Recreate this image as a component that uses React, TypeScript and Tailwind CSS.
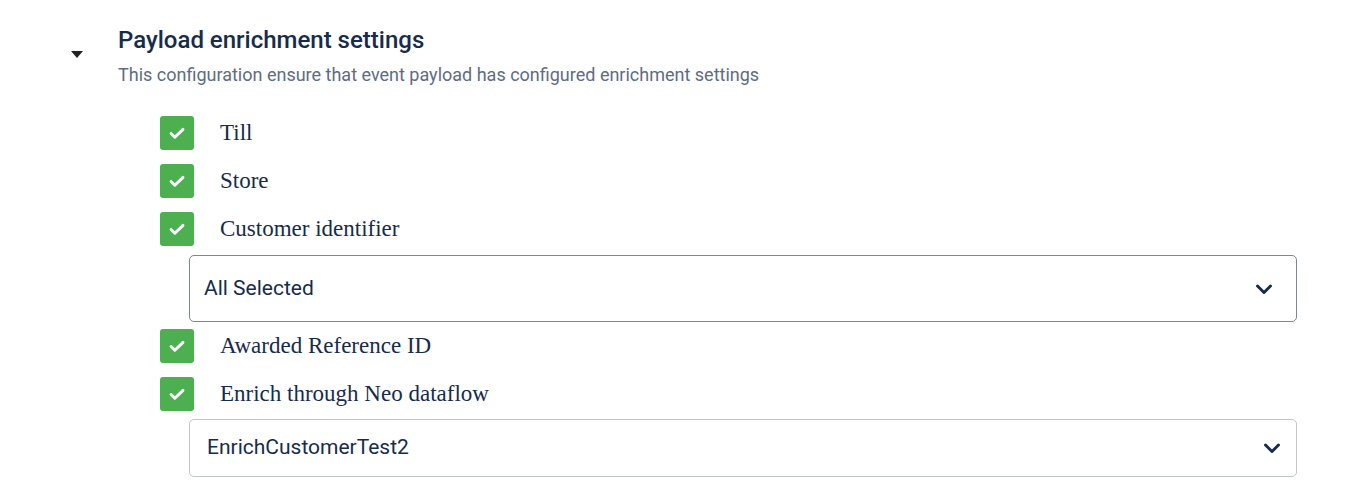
import React from "react";

function Check({ label }: { label: string }) {
  return (
    <div className="flex h-[34px] items-center">
      <span className="flex h-[34px] w-[34px] items-center justify-center rounded-[3px] bg-[#4caf50]">
        <svg viewBox="0 0 24 24" className="h-[22px] w-[22px]" fill="none" stroke="#fff" strokeWidth="3.2" strokeLinecap="round" strokeLinejoin="round">
          <path d="M5.5 12.5l4.2 4.2L18.5 8" />
        </svg>
      </span>
      <span className="ml-[26px] font-['Liberation_Serif',serif] text-[23px] leading-[28px] text-[#172b4d]">{label}</span>
    </div>
  );
}

function Chevron() {
  return (
    <svg viewBox="0 0 24 24" className="h-[24px] w-[24px]" fill="none" stroke="#172b4d" strokeWidth="2.9" strokeLinecap="round" strokeLinejoin="round">
      <path d="M5.5 9l6.5 6.5L18.5 9" />
    </svg>
  );
}

export default function App() {
  return (
    <div className="min-h-screen bg-white pl-[71px] pt-[26px] font-['Roboto',sans-serif]">
      <div className="flex">
        <div className="w-[47px] pt-[25px]">
          <div className="h-0 w-0 border-x-[6px] border-t-[7px] border-x-transparent border-t-[#222]" />
        </div>
        <div className="flex flex-col">
          <h2 className="text-[24px] font-medium leading-[28px] text-[#172b4d]">Payload enrichment settings</h2>
          <p className="mt-[9px] text-[18px] leading-[24px] text-[#5e6c84]">
            This configuration ensure that event payload has configured enrichment settings
          </p>

          <div className="ml-[42px] mt-[29px] flex flex-col">
            <div className="flex flex-col gap-[14px]">
              <Check label="Till" />
              <Check label="Store" />
              <Check label="Customer identifier" />
            </div>
            <div className="ml-[29px] mt-[9px] flex h-[67px] w-[1108px] items-center justify-between rounded-[5px] border border-[#7a869a] pl-[14px] pr-[20px]">
              <span className="text-[21px] text-[#172b4d]">All Selected</span>
              <Chevron />
            </div>
            <div className="mt-[7px] flex flex-col gap-[14px]">
              <Check label="Awarded Reference ID" />
              <Check label="Enrich through Neo dataflow" />
            </div>
            <div className="ml-[29px] mt-[8px] flex h-[58px] w-[1108px] items-center justify-between rounded-[5px] border border-[#c1c7d0] pl-[17px] pr-[12px]">
              <span className="text-[21px] text-[#172b4d]">EnrichCustomerTest2</span>
              <Chevron />
            </div>
          </div>
        </div>
      </div>
    </div>
  );
}
